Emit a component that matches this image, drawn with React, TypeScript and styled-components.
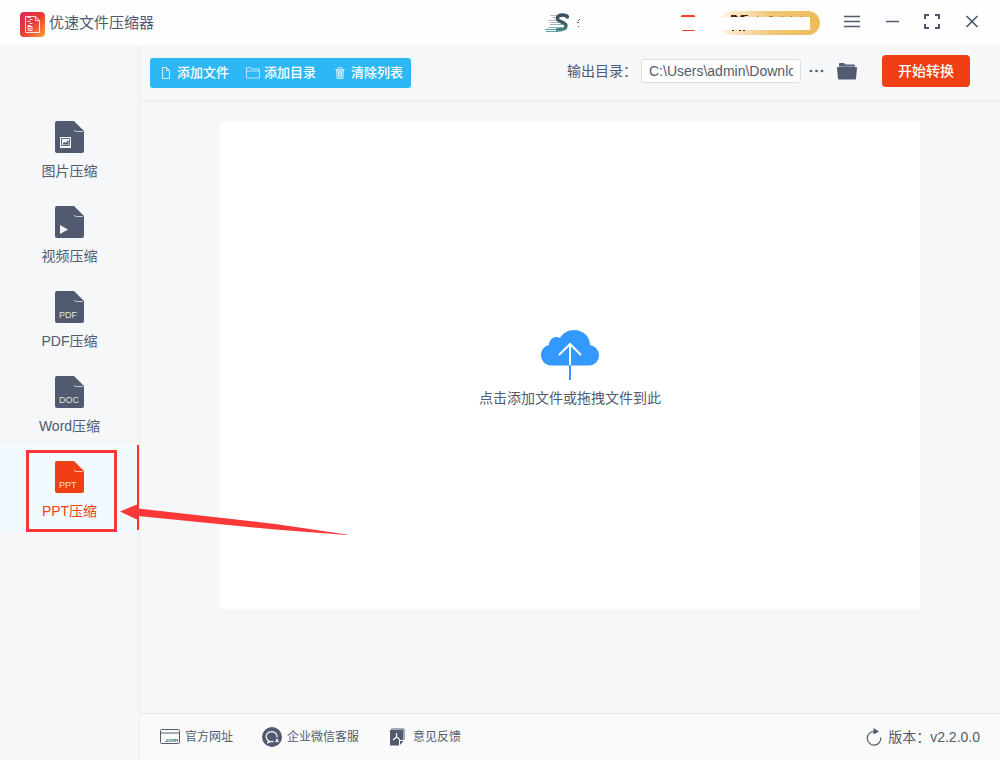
import React from 'react';
import styled, { createGlobalStyle } from 'styled-components';

const ink = '#515a6e';
const accent = '#f03f14';
const line = '#e8eaec';

const GlobalStyle = createGlobalStyle`
  * { box-sizing: border-box; }
  body {
    margin: 0;
    color: ${ink};
    background: #f5f7f9;
    font-family: "Liberation Sans", "Noto Sans CJK SC", sans-serif;
    font-size: 14px;
    line-height: 20px;
  }
  button, input { font: inherit; color: inherit; }
  button { border: 0; padding: 0; background: none; cursor: pointer; }
  a { color: inherit; text-decoration: none; }
  svg { display: block; flex: none; }
`;

const Page = styled.div`
  display: flex;
  flex-direction: column;
  min-height: 100vh;
`;

const Header = styled.header`
  display: flex;
  align-items: center;
  justify-content: space-between;
  height: 45px;
  padding: 0 8px 0 20px;
  background: #fefefe;
`;

const Brand = styled.div`
  display: flex;
  align-items: center;
  gap: 4px;
  padding-top: 4px;
`;

const Title = styled.h1`
  margin: 0;
  padding-bottom: 4px;
  font-size: 15px;
  font-weight: 400;
`;

const HeaderTools = styled.div`
  display: flex;
  align-items: center;
`;

const AccountButton = styled.button`
  display: flex;
  align-items: center;
  gap: 8px;
  width: 135px;
`;

const BadgeButton = styled.button`
  width: 16px;
  margin-right: 24px;
`;

const VipButton = styled.button`
  display: flex;
  align-items: center;
  width: 100px;
  height: 24px;
  margin-right: 12px;
  border-radius: 12px;
  background: linear-gradient(90deg, #fef3e0, #f0c573 55%, #edbb5c);
`;

const WindowButton = styled.button`
  display: flex;
  justify-content: center;
  width: 40px;
  height: 40px;
  padding-top: 9px;
`;

const Body = styled.div`
  display: flex;
  flex: 1;
`;

const Sidebar = styled.nav`
  width: 140px;
  flex: none;
  padding-top: 60px;
  border-right: 1px solid ${line};
`;

const NavItem = styled.a<{ $active?: boolean }>`
  position: relative;
  display: flex;
  flex-direction: column;
  align-items: center;
  gap: 8px;
  height: 85px;
  padding-top: 16px;
  color: ${p => (p.$active ? accent : ink)};
  background: ${p => (p.$active ? '#f0faff' : 'transparent')};
  box-shadow: ${p => (p.$active ? `inset -2px 0 ${accent}` : 'none')};
`;

const Highlight = styled.span`
  position: absolute;
  left: 26px;
  top: 5px;
  width: 91px;
  height: 82px;
  border: 3px solid #fb3838;
  pointer-events: none;
`;

const Pointer = styled.svg`
  position: absolute;
  left: 120px;
  top: 55px;
  z-index: 1;
  pointer-events: none;
`;

const Main = styled.main`
  display: flex;
  flex: 1;
  flex-direction: column;
  min-width: 0;
`;

const Toolbar = styled.div`
  display: flex;
  align-items: center;
  justify-content: space-between;
  height: 57px;
  padding: 0 30px 4px 10px;
  border-bottom: 1px solid ${line};
`;

const ButtonGroup = styled.div`
  display: flex;
  height: 30px;
  margin-top: 4px;
  border-radius: 3px;
  color: #fff;
  background: #2db7f5;
`;

const GroupButton = styled.button`
  display: flex;
  align-items: center;
  gap: 4px;
  padding: 0 8px 0 9px;
  font-size: 13px;
  font-weight: 500;
`;

const Output = styled.div`
  display: flex;
  align-items: center;
`;

const PathInput = styled.input`
  width: 160px;
  height: 24px;
  margin: 0 8px 0 4px;
  padding: 0 7px;
  border: 1px solid #dcdee2;
  border-radius: 3px;
  background: #fff;
`;

const FolderButton = styled.button`
  margin: 0 25px 0 13px;
`;

const StartButton = styled.button`
  width: 88px;
  height: 32px;
  border-radius: 4px;
  color: #fff;
  background: ${accent};
  font-weight: 500;
`;

const DropZone = styled.button`
  display: flex;
  flex: 1;
  flex-direction: column;
  align-items: center;
  justify-content: center;
  gap: 8px;
  margin: 20px 80px 104px;
  padding-top: 7px;
  background: #fff;
`;

const Footer = styled.footer`
  display: flex;
  align-items: center;
  justify-content: space-between;
  height: 47px;
  padding: 0 20px;
  border-top: 1px solid ${line};
  background: #fafafa;
`;

const FooterLinks = styled.div`
  display: flex;
  gap: 29px;
`;

const FooterLink = styled.a`
  display: flex;
  align-items: center;
  gap: 5px;
  font-size: 12px;
`;

const Version = styled.div`
  display: flex;
  align-items: center;
  gap: 6px;
`;

const AppLogo = () => (
  <svg width="25" height="25" viewBox="0 0 25 25" fill="none">
    <defs>
      <linearGradient id="logo" x1="0" y1="0" x2="1" y2="1">
        <stop offset="0" stopColor="#dd2b55" />
        <stop offset=".5" stopColor="#ea3b35" />
        <stop offset="1" stopColor="#f7a63c" />
      </linearGradient>
    </defs>
    <rect width="25" height="25" rx="4" fill="url(#logo)" />
    <path d="M5.500 4.500h10l4 4v12h-14zM15.500 4.500v4h4" stroke="#fff" strokeOpacity=".85" />
    <path d="M7.500 5.500h3M9.500 7.500h3M7.500 9.500h3M9.500 11.500h3M7.500 13.500h3" stroke="#fff" strokeOpacity=".9" />
    <path d="M8 14.500h4v4H8z" stroke="#fff" strokeOpacity=".9" />
    <path d="M9 16.500h2" stroke="#fff" />
  </svg>
);

const AccountIcon = () => (
  <svg width="24" height="20" viewBox="0 0 24 20" fill="none">
    <defs>
      <linearGradient id="account" x1="0" y1="0" x2="0" y2="20" gradientUnits="userSpaceOnUse">
        <stop offset="0" stopColor="#3b4a58" />
        <stop offset=".55" stopColor="#3f5f6b" />
        <stop offset="1" stopColor="#4d9a9c" />
      </linearGradient>
    </defs>
    <path d="M5 2.500h9M8 4.500h5M3 7.500h9M5 9.500h9" stroke="#b4bbc0" />
    <path d="M5 11.500h13M3 14.500h14" stroke="#8fb6b9" />
    <path d="M0 16.500h18M1 18.500h12" stroke="#5fa5a8" />
    <path d="M23 5.500C22.500 2.500 20 2 17.500 2 14 2 12 3.500 12.500 6c.6 3 8.500 3 8.500 7 0 3.500-5 4-10 4" stroke="url(#account)" strokeWidth="3.500" />
  </svg>
);

const VipArt = () => (
  <svg width="100" height="24" viewBox="0 0 100 24">
    <path d="M11 4h5l2 2h-7zM21 4h7v1h-3l-1 1h-4zM12 19h2v1h-2zM19 19h2v1h-2zM23 19h2v1h-2z" fill="#541f18" />
    <path d="M37 5h1v1h-1zM49 5h4v1h-4zM62 5h1v1h-1zM71 5h1v1h-1zM81 5h1v1h-1z" fill="#a77543" />
    <path d="M0 6h90v13H0z" fill="#fefefe" />
  </svg>
);

const FileIcon = ({ kind }: { kind: string }) => (
  <svg width="29" height="32" viewBox="0 0 29 32">
    <path d="M2 0h17l10 10v20a2 2 0 0 1-2 2H2a2 2 0 0 1-2-2V2a2 2 0 0 1 2-2z" fill="currentColor" />
    <path d="M19 9q.5 1.500 2.500 1.500H28" fill="none" stroke="#f5f7f9" strokeOpacity=".8" strokeWidth=".9" />
    {kind === 'image' && (
      <>
        <path d="M5 16h11v11H5z" fill="#f5f7f9" />
        <path d="M6.500 17.500h8v7h-8z" fill="none" stroke="currentColor" strokeWidth=".9" />
        <path d="M8 23.500V22l1.500-1 1.500 1 1.500-2.500 1 .5v3.500z" fill="currentColor" />
      </>
    )}
    {kind === 'video' && <path d="M5 19l8 4.500L5 28z" fill="#f5f7f9" />}
    {kind.length === 3 && (
      <text x="4" y="27" fill="#f5f7f9" fillOpacity=".9" fontSize="9">{kind}</text>
    )}
  </svg>
);

const DocGlyph = () => (
  <svg width="14" height="14" viewBox="0 0 14 14" fill="none" stroke="#fff" strokeOpacity=".75">
    <path d="M3.500 1.500h4l3 3v8h-7zM7.500 1.500v3h3" />
  </svg>
);

const FolderGlyph = () => (
  <svg width="14" height="14" viewBox="0 0 14 14" fill="none" stroke="#fff" strokeOpacity=".65">
    <path d="M.5 1.500h4l1 1.500h8v9H.5zM.5 5h13" />
  </svg>
);

const TrashGlyph = () => (
  <svg width="14" height="14" viewBox="0 0 14 14" fill="none" stroke="#fff" strokeOpacity=".6">
    <path d="M3.500 4h7l-.5 8.500H4z" fill="#fff" fillOpacity=".3" />
    <path d="M2 3.500h10M5 3V1.500h4V3M5.500 5v6M7 5v6M8.500 5v6" />
  </svg>
);

const CloudIcon = () => (
  <svg width="58" height="50" viewBox="0 0 58 50" fill="none">
    <path d="M10 35.500C4 35 0 30.500 0 25c0-5 3.500-9 8-10 0-6 6-10 11-7C22 3 27 0 33 0c9 0 16 6.500 16 15 5 1 9 5 9 10 0 6-4.500 10.500-10 10.500z" fill="#39f" />
    <path d="M29 35v15" stroke="#39f" strokeWidth="2" />
    <path d="M29 35V14M18 25l11-11 11 11" stroke="#fff" strokeWidth="2" />
  </svg>
);

const SiteIcon = () => (
  <svg width="20" height="16" viewBox="0 0 20 16" fill="none" stroke="currentColor">
    <rect x=".5" y=".5" width="19" height="14" rx="1" />
    <path d="M1 4h18" />
    <text x="4" y="13" fill="currentColor" stroke="none" fontSize="6" fontWeight="700">.com</text>
  </svg>
);

const ChatIcon = () => (
  <svg width="20" height="20" viewBox="0 0 20 20" fill="none">
    <circle cx="10" cy="10" r="10" fill="currentColor" />
    <path d="M15 10.500A5.500 5 0 1 0 11.500 14.300M6.500 13l-.5 2.500 2.500-1.200" stroke="#fafafa" strokeWidth="1.300" />
    <path d="M14 12.500l2.500 2.500M16 12.500L13.500 15" stroke="#fafafa" strokeWidth="1.300" />
  </svg>
);

const FeedbackIcon = () => (
  <svg width="20" height="18" viewBox="0 0 20 18" fill="none">
    <path d="M2 2h13v10h-4v5.500H2z" fill="currentColor" />
    <path d="M3 1h13v11" stroke="currentColor" />
    <path d="M12 17v-4h3.500z" fill="currentColor" />
    <path d="M8.500 5v4l-3.500 3M8.500 9l3.500 2.500" stroke="#fafafa" strokeWidth="1.200" />
  </svg>
);

const RefreshIcon = () => (
  <svg width="16" height="18" viewBox="0 0 16 18" fill="none">
    <path d="M8 3.500A6.800 6.800 0 1 0 14.800 9.500" stroke="currentColor" strokeWidth="1.200" />
    <path d="M7.500 0l5.500 3.500L7.500 6.500z" fill="currentColor" />
  </svg>
);

const navItems = [
  { kind: 'image', label: '图片压缩' },
  { kind: 'video', label: '视频压缩' },
  { kind: 'PDF', label: 'PDF压缩' },
  { kind: 'DOC', label: 'Word压缩' },
  { kind: 'PPT', label: 'PPT压缩', active: true },
];

const windowControls = [
  { label: '菜单', path: 'M1 4.500h16M1 9.500h16M1 14.500h16', width: 1.5 },
  { label: '最小化', path: 'M3 9.500h13', width: 1.5 },
  { label: '最大化', path: 'M2 7V3h4M12 3h4v4M16 12v4h-4M6 16H2v-4', width: 2 },
  { label: '关闭', path: 'M3.500 4l11 11M14.500 4l-11 11', width: 1.7 },
];

export default function App() {
  return (
    <Page>
      <GlobalStyle />
      <Header>
        <Brand>
          <AppLogo />
          <Title>优速文件压缩器</Title>
        </Brand>
        <HeaderTools>
          <AccountButton aria-label="账户">
            <AccountIcon />
            <svg width="3" height="10" viewBox="0 0 3 10" fill={ink}>
              <path d="M1 2h1v1H1zM0 4h2v1H0zM1 8h1v1H1zM2 1h1v1H2z" />
            </svg>
          </AccountButton>
          <BadgeButton aria-label="消息">
            <svg width="16" height="18" viewBox="0 0 16 18" fill={accent}>
              <path d="M2 1h12l1.500 2H.5zM1 16h14v.5L13 17H3z" />
            </svg>
          </BadgeButton>
          <VipButton aria-label="会员">
            <VipArt />
          </VipButton>
          {windowControls.map(c => (
            <WindowButton key={c.label} aria-label={c.label}>
              <svg width="18" height="18" viewBox="0 0 18 18" fill="none" stroke={ink} strokeWidth={c.width}>
                <path d={c.path} />
              </svg>
            </WindowButton>
          ))}
        </HeaderTools>
      </Header>
      <Body>
        <Sidebar>
          {navItems.map(item => (
            <NavItem key={item.kind} href="#" $active={item.active}>
              <FileIcon kind={item.kind} />
              {item.label}
              {item.active && (
                <>
                  <Highlight />
                  <Pointer width="230" height="36" viewBox="0 0 230 36">
                    <path d="M0 11.500L18 4v4.500L155 24l72 10.500v.5l-72-5.500L18 16v4z" fill="#fb3838" />
                  </Pointer>
                </>
              )}
            </NavItem>
          ))}
        </Sidebar>
        <Main>
          <Toolbar>
            <ButtonGroup>
              <GroupButton><DocGlyph />添加文件</GroupButton>
              <GroupButton><FolderGlyph />添加目录</GroupButton>
              <GroupButton><TrashGlyph />清除列表</GroupButton>
            </ButtonGroup>
            <Output>
              <label htmlFor="output-path">输出目录：</label>
              <PathInput id="output-path" readOnly value="C:\Users\admin\Downloads" />
              <button aria-label="更多">
                <svg width="15" height="4" viewBox="0 0 15 4" fill={ink}>
                  <circle cx="2" cy="2" r="1.300" />
                  <circle cx="7.500" cy="2" r="1.300" />
                  <circle cx="13" cy="2" r="1.300" />
                </svg>
              </button>
              <FolderButton aria-label="打开目录">
                <svg width="20" height="18" viewBox="0 0 20 18" fill={ink}>
                  <path d="M2 5V2q0-1 1-1h4l1.500 1.500H17q1 0 1 1V5z" />
                  <path d="M1 5h18q1 0 1 1l-1 10.500q0 1-1 1H2q-1 0-1-1L0 6q0-1 1-1z" />
                  <path d="M2 4.300h16" stroke="#b9bec9" strokeWidth=".7" />
                </svg>
              </FolderButton>
              <StartButton>开始转换</StartButton>
            </Output>
          </Toolbar>
          <DropZone>
            <CloudIcon />
            点击添加文件或拖拽文件到此
          </DropZone>
          <Footer>
            <FooterLinks>
              <FooterLink href="#"><SiteIcon />官方网址</FooterLink>
              <FooterLink href="#"><ChatIcon />企业微信客服</FooterLink>
              <FooterLink href="#"><FeedbackIcon />意见反馈</FooterLink>
            </FooterLinks>
            <Version><RefreshIcon />版本：v2.2.0.0</Version>
          </Footer>
        </Main>
      </Body>
    </Page>
  );
}
